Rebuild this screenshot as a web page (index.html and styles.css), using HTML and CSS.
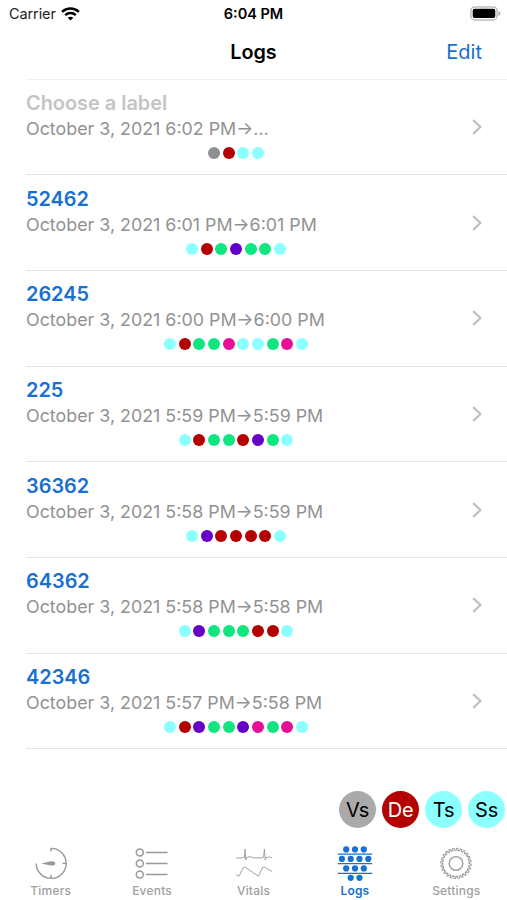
FILE: index.html
```
<!DOCTYPE html>
<html lang="en">
<head>
  <meta charset="UTF-8" />
  <meta name="viewport" content="width=device-width, initial-scale=1.0"/>
  <title>Logs</title>
  <link rel="stylesheet" href="styles.css">
</head>
<body>

  <!-- Status Bar -->
  <div class="status-bar">
    <div class="carrier">
      <span>Carrier</span>
      <svg width="19" height="14" viewBox="0 0 19 14" fill="none" stroke="#000" stroke-width="2.5">
        <path d="M1.1 4.9C5.8 0.4 13.2 0.4 17.9 4.9"/>
        <path d="M4.2 8.1C7.2 5.3 11.8 5.3 14.8 8.1"/>
        <path d="M9.5 13.6L6.7 10.8C8.3 9.4 10.7 9.4 12.3 10.8Z" fill="#000" stroke="none"/>
      </svg>
    </div>
    <div class="time">6:04 PM</div>
    <div class="battery">
      <svg width="31" height="15" viewBox="0 0 31 15">
        <rect x="0.9" y="0.9" width="26.2" height="13" rx="4" fill="#fff" stroke="#bdbdbd" stroke-width="1.5"/>
        <rect x="2.7" y="2.7" width="22.6" height="9.4" rx="2" fill="#000"/>
        <path d="M28.4 5C31 5.8 31 9 28.4 9.8Z" fill="#aaa"/>
      </svg>
    </div>
  </div>

  <header>
    <h1>Logs</h1>
    <a class="edit">Edit</a>
  </header>

  <!-- Log List -->
  <main class="logs">
    <div class="log">
      <div class="info">
        <div class="label empty">Choose a label</div>
        <div class="date">October 3, 2021 6:02 PM→…</div>
        <div class="dots"><i class="vs"></i><i class="de"></i><i class="ts"></i><i class="ts"></i></div>
      </div>
      <svg class="chevron" viewBox="0 0 10 16"><path d="M1.2 1.2L8.4 8L1.2 14.8"/></svg>
    </div>
    <div class="log">
      <div class="info">
        <div class="label">52462</div>
        <div class="date">October 3, 2021 6:01 PM→6:01 PM</div>
        <div class="dots"><i class="ts"></i><i class="de"></i><i class="green"></i><i class="purple"></i><i class="green"></i><i class="green"></i><i class="ts"></i></div>
      </div>
      <svg class="chevron" viewBox="0 0 10 16"><path d="M1.2 1.2L8.4 8L1.2 14.8"/></svg>
    </div>
    <div class="log">
      <div class="info">
        <div class="label">26245</div>
        <div class="date">October 3, 2021 6:00 PM→6:00 PM</div>
        <div class="dots"><i class="ts"></i><i class="de"></i><i class="green"></i><i class="green"></i><i class="pink"></i><i class="ts"></i><i class="ts"></i><i class="green"></i><i class="pink"></i><i class="ts"></i></div>
      </div>
      <svg class="chevron" viewBox="0 0 10 16"><path d="M1.2 1.2L8.4 8L1.2 14.8"/></svg>
    </div>
    <div class="log">
      <div class="info">
        <div class="label">225</div>
        <div class="date">October 3, 2021 5:59 PM→5:59 PM</div>
        <div class="dots"><i class="ts"></i><i class="de"></i><i class="green"></i><i class="green"></i><i class="de"></i><i class="purple"></i><i class="green"></i><i class="ts"></i></div>
      </div>
      <svg class="chevron" viewBox="0 0 10 16"><path d="M1.2 1.2L8.4 8L1.2 14.8"/></svg>
    </div>
    <div class="log">
      <div class="info">
        <div class="label">36362</div>
        <div class="date">October 3, 2021 5:58 PM→5:59 PM</div>
        <div class="dots"><i class="ts"></i><i class="purple"></i><i class="de"></i><i class="de"></i><i class="de"></i><i class="de"></i><i class="ts"></i></div>
      </div>
      <svg class="chevron" viewBox="0 0 10 16"><path d="M1.2 1.2L8.4 8L1.2 14.8"/></svg>
    </div>
    <div class="log">
      <div class="info">
        <div class="label">64362</div>
        <div class="date">October 3, 2021 5:58 PM→5:58 PM</div>
        <div class="dots"><i class="ts"></i><i class="purple"></i><i class="green"></i><i class="green"></i><i class="green"></i><i class="de"></i><i class="de"></i><i class="ts"></i></div>
      </div>
      <svg class="chevron" viewBox="0 0 10 16"><path d="M1.2 1.2L8.4 8L1.2 14.8"/></svg>
    </div>
    <div class="log">
      <div class="info">
        <div class="label">42346</div>
        <div class="date">October 3, 2021 5:57 PM→5:58 PM</div>
        <div class="dots"><i class="ts"></i><i class="de"></i><i class="purple"></i><i class="green"></i><i class="green"></i><i class="purple"></i><i class="pink"></i><i class="green"></i><i class="pink"></i><i class="ts"></i></div>
      </div>
      <svg class="chevron" viewBox="0 0 10 16"><path d="M1.2 1.2L8.4 8L1.2 14.8"/></svg>
    </div>
  </main>

  <!-- Current events -->
  <div class="badges">
    <span class="badge gray">Vs</span>
    <span class="badge de">De</span>
    <span class="badge ts">Ts</span>
    <span class="badge ts">Ss</span>
  </div>

  <!-- Tab Bar -->
  <nav>
    <a class="tab">
      <svg width="36" height="36" viewBox="0 0 36 36" fill="none" stroke="#999" stroke-width="1.4">
        <path d="M18 6.6V3.4A15 15 0 1 1 3.2 18.4M18 33.2V29.8M33 18.4H29.5"/>
        <path d="M8 18.4L18 16.3Q22 16 22.3 18.4Q22 20.8 18 20.5Z" fill="#999" stroke="none"/>
      </svg>
      <span>Timers</span>
    </a>
    <a class="tab">
      <svg width="36" height="36" viewBox="0 0 36 36" fill="none" stroke="#999" stroke-width="1.5">
        <circle cx="5.8" cy="7.6" r="3.5"/>
        <circle cx="5.8" cy="18.6" r="3.5"/>
        <circle cx="5.8" cy="29.6" r="3.5"/>
        <path d="M12 7.6H33.5M12 18.6H33.5M12 29.6H33.5"/>
      </svg>
      <span>Events</span>
    </a>
    <a class="tab">
      <svg width="36" height="36" viewBox="0 0 36 36" fill="none" stroke="#999" stroke-width="0.9">
        <path d="M0 13H6L7.5 12.3L8.3 13L9 4L9.8 15L10.5 12.5L14 11.6L17 12.7L25 13L27.6 12.3L28.4 4L29.2 15L30 12.5L33 12L36 12.6"/>
        <path d="M0 29.5L3 31.2L7 22.8Q8.5 21.5 10 22.8L22.5 31.2L26.5 22.6Q28 21.5 30 23L36 26.5"/>
      </svg>
      <span>Vitals</span>
    </a>
    <a class="tab active">
      <svg width="36" height="36" viewBox="0 0 36 36" fill="#1870d0">
        <g stroke="#1870d0" stroke-width="1.3">
          <path d="M0.8 9.1H35.2M0.8 18.6H35.2M0.8 28.3H35.2"/>
        </g>
        <circle cx="9.2" cy="4.4" r="3.1"/><circle cx="18" cy="4.4" r="3.1"/><circle cx="26.8" cy="4.4" r="3.1"/>
        <circle cx="4.9" cy="13.9" r="3.1"/><circle cx="13.7" cy="13.9" r="3.1"/><circle cx="22.5" cy="13.9" r="3.1"/><circle cx="31.3" cy="13.9" r="3.1"/>
        <circle cx="9.2" cy="23.4" r="3.1"/><circle cx="18" cy="23.4" r="3.1"/><circle cx="26.8" cy="23.4" r="3.1"/>
        <circle cx="13.7" cy="32.8" r="3.1"/><circle cx="22.5" cy="32.8" r="3.1"/>
      </svg>
      <span>Logs</span>
    </a>
    <a class="tab">
      <svg width="36" height="36" viewBox="0 0 36 36" fill="none">
        <circle cx="18" cy="18.4" r="14.2" stroke="#999" stroke-width="3" pathLength="240" stroke-dasharray="6.4 3.6"/>
        <circle cx="18" cy="18.4" r="14" fill="#999"/>
        <circle cx="18" cy="18.4" r="13.3" stroke="#fff" stroke-width="2.7" pathLength="240" stroke-dasharray="2.4 7.6" stroke-dashoffset="-2"/>
        <circle cx="18" cy="18.4" r="12.6" fill="#fff"/>
        <circle cx="18" cy="18.4" r="6.8" stroke="#999" stroke-width="1.4"/>
      </svg>
      <span>Settings</span>
    </a>
  </nav>

</body>
</html>
```
FILE: styles.css
```
:root {
  --blue: #1870d0;
  --gray: #929292;
  --line: #e6e6e6;
}

* {
  box-sizing: border-box;
}

body {
  margin: 0;
  height: 900px;
  display: flex;
  flex-direction: column;
  overflow: hidden;
  background: #fff;
  color: #000;
  font-family: 'Inter', 'Liberation Sans', sans-serif;
}

.status-bar,
header,
.logs,
.badges,
nav {
  flex-shrink: 0;
}

.status-bar {
  display: grid;
  grid-template-columns: 1fr auto 1fr;
  align-items: center;
  height: 27px;
  padding: 0 6px 0 9px;
  font-size: 14.5px;
}

.carrier {
  display: flex;
  align-items: center;
  gap: 5px;
  color: #222;
}

.carrier span {
  letter-spacing: -0.1px;
}

.time {
  margin-right: 3px;
  font-weight: 600;
}

.battery {
  display: flex;
  justify-content: flex-end;
}

header {
  display: grid;
  grid-template-columns: 1fr auto 1fr;
  align-items: center;
  height: 52px;
  padding: 0 25px 2px;
}

h1 {
  grid-column: 2;
  margin: 0;
  font-size: 19.8px;
  font-weight: 600;
}

.edit {
  justify-self: end;
  font-size: 20px;
  color: var(--blue);
}

.logs {
  margin-left: 26px;
  border-top: 1px solid #f0f0f0;
}

.log {
  display: flex;
  align-items: center;
  height: 95.7px;
  padding-right: 25px;
  border-bottom: 1px solid var(--line);
}

.log:first-child {
  height: 95.2px;
}

.info {
  width: 420px;
  padding-top: 1px;
}

.label {
  font-size: 19.9px;
  font-weight: 600;
  line-height: 25px;
  color: var(--blue);
}

.label.empty {
  color: #c4c4c4;
}

.date {
  font-size: 17.85px;
  line-height: 26px;
  color: var(--gray);
  white-space: nowrap;
}

.dots {
  display: flex;
  justify-content: center;
  gap: 2.67px;
  padding: 5px 0;
}

.dots i {
  width: 12px;
  height: 12px;
  border-radius: 50%;
}

.vs { background: #8e8e93; }
.gray { background: #aaa; }
.de { background: #b40000; }
.ts { background: #8cffff; }
.green { background: #0fe67f; }
.purple { background: #6400c8; }
.pink { background: #e60f96; }

.chevron {
  width: 10px;
  height: 16px;
  margin-left: auto;
  fill: none;
  stroke: #c0c0c2;
  stroke-width: 2.3;
}

.badges {
  display: flex;
  justify-content: flex-end;
  gap: 6px;
  margin-top: 41.5px;
  padding-right: 2px;
}

.badge {
  width: 37px;
  height: 37px;
  border-radius: 50%;
  font-size: 20px;
  line-height: 38px;
  letter-spacing: -0.3px;
  text-align: center;
}

.badge.de {
  color: #fff;
}

nav {
  display: flex;
  margin-top: 17px;
}

.tab {
  flex: 1;
  display: flex;
  flex-direction: column;
  align-items: center;
  font-size: 12px;
  font-weight: 500;
  line-height: 20px;
  letter-spacing: 0.2px;
  color: #a0a0a0;
}

.tab.active {
  color: var(--blue);
  font-weight: 600;
}
```
